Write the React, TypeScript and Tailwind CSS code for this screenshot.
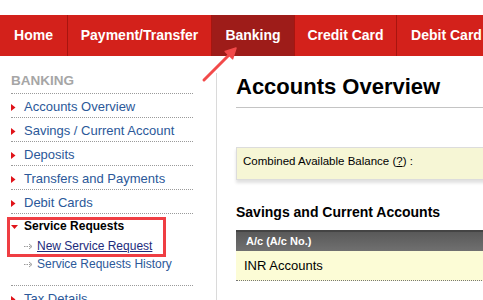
import React from "react";

const font = "font-['Liberation_Sans',Arial,sans-serif]";

function RightTri() {
  return (
    <svg width="5" height="7" viewBox="0 0 5 7" className="shrink-0">
      <polygon points="0,0 4.5,3.5 0,7" fill="#e0141a" />
    </svg>
  );
}

function DownTri() {
  return (
    <svg width="7" height="4" viewBox="0 0 7 4" className="shrink-0">
      <polygon points="0,0 7,0 3.5,4" fill="#e0141a" />
    </svg>
  );
}

function SubArrow() {
  return (
    <svg width="10" height="7" viewBox="0 0 10 7" className="shrink-0">
      <line x1="0" y1="3.5" x2="7" y2="3.5" stroke="#9a9a9a" strokeWidth="1" strokeDasharray="1.5 1" />
      <polyline points="5,1 8,3.5 5,6" fill="none" stroke="#9a9a9a" strokeWidth="1" />
    </svg>
  );
}

const tabs = [
  { label: "Home", w: "w-[68px]", active: false },
  { label: "Payment/Transfer", w: "w-[144px]", active: false },
  { label: "Banking", w: "w-[83px]", active: true },
  { label: "Credit Card", w: "w-[102px]", active: false },
  { label: "Debit Card", w: "w-[100px]", active: false },
];

const items = [
  "Accounts Overview",
  "Savings / Current Account",
  "Deposits",
  "Transfers and Payments",
  "Debit Cards",
];

export default function App() {
  return (
    <div className={`relative w-[483px] h-[300px] overflow-hidden bg-white ${font}`}>
      <div className="h-[15px]" />
      <nav className="flex h-[41px] bg-[#d3211b] whitespace-nowrap">
        {tabs.map((t) => (
          <div
            key={t.label}
            className={`${t.w} shrink-0 flex items-center justify-center border-r border-[#a8150f] text-[14px] font-bold text-white ${
              t.active ? "bg-[#9e1c19]" : ""
            }`}
          >
            {t.label}
          </div>
        ))}
      </nav>

      <div className="flex">
        <aside className="w-[216px] shrink-0 pl-[11px] pr-[23px] pt-[17px]">
          <div className="text-[13.5px] leading-[16px] font-bold text-[#a6a6a6] pb-[4px] border-b border-dotted border-[#9a9a9a]">
            BANKING
          </div>
          {items.map((it) => (
            <div
              key={it}
              className="flex items-center pt-[2px] leading-[21px] border-b border-dotted border-[#9a9a9a]"
            >
              <div className="w-[13px] flex items-center pt-[1px]">
                <RightTri />
              </div>
              <span className="text-[13px] text-[#2b5899]">{it}</span>
            </div>
          ))}
          <div className="pb-[12px] border-b border-dotted border-[#9a9a9a]">
            <div className="flex items-center pt-[2px] leading-[21px]">
              <div className="w-[13px] flex items-center pt-[1px]">
                <DownTri />
              </div>
              <span className="text-[12px] font-bold text-black">Service Requests</span>
            </div>
            <div className="flex items-center leading-[18px] pl-[13px]">
              <div className="w-[13px] flex items-center pt-[1px]">
                <SubArrow />
              </div>
              <span className="text-[12px] text-[#1d2b7c] underline">New Service Request</span>
            </div>
            <div className="flex items-center leading-[18px] pl-[13px]">
              <div className="w-[13px] flex items-center pt-[1px]">
                <SubArrow />
              </div>
              <span className="text-[12px] text-[#2b5899]">Service Requests History</span>
            </div>
          </div>
          <div className="flex items-center pt-[2px] leading-[21px]">
            <div className="w-[13px] flex items-center pt-[1px]">
              <RightTri />
            </div>
            <span className="text-[13px] text-[#2b5899]">Tax Details</span>
          </div>
        </aside>

        <main className="flex-1 min-w-0 mt-[17px] border-l border-[#dadada] pl-[19px] h-[300px]">
          <h1 className="text-[22px] leading-[28px] font-bold text-black pb-[6px] border-b border-[#c4c4c4] whitespace-nowrap">
            Accounts Overview
          </h1>
          <div className="mt-[39px] w-[300px] border border-[#dcdcdc] bg-[#f6f6d5] pl-[6px] pt-[3px] pb-[8px] leading-[20px] text-[11.5px] text-black whitespace-nowrap shadow-[0_3px_3px_rgba(0,0,0,0.12)]">
            Combined Available Balance (<span className="underline">?</span>) :
          </div>
          <div className="mt-[24px] text-[14px] leading-[17px] font-bold text-black whitespace-nowrap">
            Savings and Current Accounts
          </div>
          <div className="mt-[9px] w-[300px] h-[21px] border-t-2 border-[#444] bg-gradient-to-b from-[#595959] to-[#707070] pl-[10px] flex items-center text-[11px] font-bold text-white whitespace-nowrap">
            A/c (A/c No.)
          </div>
          <div className="w-[300px] h-[30px] bg-[#fcfcd6] border-b border-dotted border-[#777] pl-[8px] flex items-center text-[13px] text-black whitespace-nowrap">
            INR Accounts
          </div>
        </main>
      </div>

      <div className="absolute left-[7px] top-[217px] w-[159px] h-[40px] border-[3px] border-[#ef3e43] pointer-events-none" />

      <svg className="absolute left-0 top-0 pointer-events-none" width="483" height="300" viewBox="0 0 483 300">
        <line x1="204" y1="80" x2="230" y2="54" stroke="#f24a4a" strokeWidth="3" strokeLinecap="round" />
        <polygon points="236,48 232.6,58.8 225.2,51.4" fill="#f24a4a" stroke="#f24a4a" strokeWidth="1.5" strokeLinejoin="round" />
      </svg>
    </div>
  );
}
